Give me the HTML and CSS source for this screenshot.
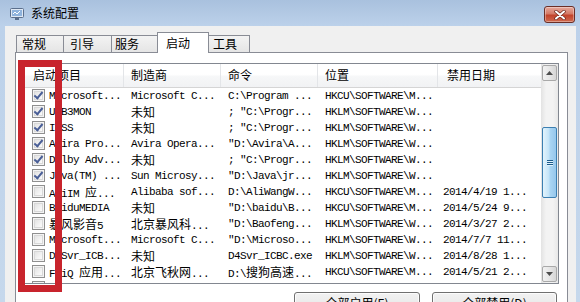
FILE: index.html
```html
<!DOCTYPE html>
<html>
<head>
<meta charset="utf-8">
<link rel="stylesheet" href="styles.css">
</head>
<body>
<div class="window">
  <div class="titlebar">
    <svg class="appicon" width="14" height="12" viewBox="0 0 14 12">
      <rect x="0.5" y="0.5" width="13" height="9" rx="1" fill="#dfe8f3" stroke="#5b6f8c"/>
      <rect x="2" y="2" width="10" height="6" fill="#8fb3dc"/>
      <path d="M3 6 L5 4 L7 6 L10 3" fill="none" stroke="#ffffff" stroke-width="1"/>
      <rect x="5" y="10" width="4" height="2" fill="#5b6f8c"/>
    </svg>
    <span class="title">系统配置</span>
    <div class="close">
      <svg width="14" height="10" viewBox="0 0 14 10">
        <path d="M3 1.5 L11 8.5 M11 1.5 L3 8.5" stroke="#6a2518" stroke-width="3.4" stroke-linecap="round"/>
        <path d="M3 1.5 L11 8.5 M11 1.5 L3 8.5" stroke="#ffffff" stroke-width="2" stroke-linecap="round"/>
      </svg>
    </div>
  </div>
  <div class="client">
    <div class="tabs">
      <div class="tab t1">常规</div>
      <div class="tab t2">引导</div>
      <div class="tab t3">服务</div>
      <div class="tab t4 sel">启动</div>
      <div class="tab t5">工具</div>
    </div>
    <div class="page">
      <div class="list">
        <div class="list-main">
          <div class="hdr">
            <div class="hc c1">启动项目</div>
            <div class="hc c2">制造商</div>
            <div class="hc c3">命令</div>
            <div class="hc c4">位置</div>
            <div class="hc c5">禁用日期</div>
          </div>
          <div class="row"><div class="c1"><span class="cb on"></span>Microsoft...</div><div class="c2">Microsoft C...</div><div class="c3">C:\Program ...</div><div class="c4">HKCU\SOFTWARE\M...</div><div class="c5"></div></div>
          <div class="row"><div class="c1"><span class="cb on"></span>USB3MON</div><div class="c2"><span class="cj">未知</span></div><div class="c3">; "C:\Progr...</div><div class="c4">HKLM\SOFTWARE\W...</div><div class="c5"></div></div>
          <div class="row"><div class="c1"><span class="cb on"></span>IDSS</div><div class="c2"><span class="cj">未知</span></div><div class="c3">; "C:\Progr...</div><div class="c4">HKLM\SOFTWARE\W...</div><div class="c5"></div></div>
          <div class="row"><div class="c1"><span class="cb on"></span>Avira Pro...</div><div class="c2">Avira Opera...</div><div class="c3">"D:\Avira\A...</div><div class="c4">HKLM\SOFTWARE\W...</div><div class="c5"></div></div>
          <div class="row"><div class="c1"><span class="cb on"></span>Dolby Adv...</div><div class="c2"><span class="cj">未知</span></div><div class="c3">; "C:\Progr...</div><div class="c4">HKLM\SOFTWARE\W...</div><div class="c5"></div></div>
          <div class="row"><div class="c1"><span class="cb on"></span>Java(TM) ...</div><div class="c2">Sun Microsy...</div><div class="c3">"D:\Java\jr...</div><div class="c4">HKLM\SOFTWARE\W...</div><div class="c5"></div></div>
          <div class="row"><div class="c1"><span class="cb"></span>AliIM <span class="cj">应</span>...</div><div class="c2">Alibaba sof...</div><div class="c3">D:\AliWangW...</div><div class="c4">HKCU\SOFTWARE\M...</div><div class="c5">2014/4/19 1...</div></div>
          <div class="row"><div class="c1"><span class="cb"></span>BaiduMEDIA</div><div class="c2"><span class="cj">未知</span></div><div class="c3">"D:\baidu\B...</div><div class="c4">HKCU\SOFTWARE\M...</div><div class="c5">2014/5/24 9...</div></div>
          <div class="row"><div class="c1"><span class="cb"></span><span class="cj">暴风影音</span>5</div><div class="c2"><span class="cj">北京暴风科</span>...</div><div class="c3">"D:\Baofeng...</div><div class="c4">HKLM\SOFTWARE\W...</div><div class="c5">2014/3/27 2...</div></div>
          <div class="row"><div class="c1"><span class="cb"></span>Microsoft...</div><div class="c2">Microsoft C...</div><div class="c3">"D:\Microso...</div><div class="c4">HKLM\SOFTWARE\W...</div><div class="c5">2014/7/7 11...</div></div>
          <div class="row"><div class="c1"><span class="cb"></span>D4Svr_ICB...</div><div class="c2"><span class="cj">未知</span></div><div class="c3">D4Svr_ICBC.exe</div><div class="c4">HKLM\SOFTWARE\W...</div><div class="c5">2014/8/28 1...</div></div>
          <div class="row"><div class="c1"><span class="cb"></span>FeiQ <span class="cj">应用</span>...</div><div class="c2"><span class="cj">北京飞秋网</span>...</div><div class="c3">D:\<span class="cj">搜狗高速</span>...</div><div class="c4">HKCU\SOFTWARE\M...</div><div class="c5">2014/5/21 2...</div></div>
          <div class="row"><div class="c1"><span class="cb"></span></div><div class="c2"></div><div class="c3"></div><div class="c4"></div><div class="c5"></div></div>
        </div>
        <div class="vscroll">
          <div class="sbtn">
            <svg width="7" height="4" viewBox="0 0 7 4"><path d="M0 4 L3.5 0 L7 4 Z" fill="#4d4d4d"/></svg>
          </div>
          <div class="track-a"></div>
          <div class="thumb"><span class="grip"></span><span class="grip"></span><span class="grip"></span></div>
          <div class="track-b"></div>
          <div class="sbtn">
            <svg width="7" height="4" viewBox="0 0 7 4"><path d="M0 0 L3.5 4 L7 0 Z" fill="#4d4d4d"/></svg>
          </div>
        </div>
      </div>
      <div class="buttons">
        <div class="btn b1">全部启用(<u>E</u>)</div>
        <div class="btn b2">全部禁用(<u>D</u>)</div>
      </div>
    </div>
  </div>
  <div class="redbox"></div>
</div>
</body>
</html>
```

FILE: styles.css
```css
* { box-sizing: border-box; }
html, body { margin: 0; padding: 0; }
body {
  width: 580px;
  height: 302px;
  overflow: hidden;
  font-family: "Noto Sans CJK SC", "Liberation Sans", sans-serif;
  font-size: 12px;
  color: #000;
}
.window {
  position: relative;
  width: 580px;
  height: 302px;
  background: linear-gradient(to bottom, #a9c1de 0px, #bcd1ea 26px, #c6d8ec 100%);
  display: flex;
  flex-direction: column;
}
.titlebar {
  height: 26px;
  flex: none;
  display: flex;
  align-items: center;
  padding-left: 10px;
}
.appicon { flex: none; margin-top: 1px; }
.title {
  margin-left: 7px;
  font-size: 12px;
  line-height: 14px;
  color: #000;
  flex: 1;
}
.close {
  width: 31px;
  height: 17px;
  margin-right: 5px;
  margin-top: 3px;
  border: 1px solid #6b2f27;
  border-radius: 3px;
  background: linear-gradient(to bottom, #e6a99d 0%, #d47a66 45%, #c2432b 55%, #cf6a4f 100%);
  box-shadow: inset 0 0 0 1px rgba(255,255,255,0.35);
  display: flex;
  align-items: center;
  justify-content: center;
}
.client {
  flex: 1;
  margin: 0 4px 0 5px;
  background: #f0f0f0;
  display: flex;
  flex-direction: column;
  padding-top: 6px;
}
.tabs {
  height: 20px;
  display: flex;
  align-items: flex-end;
  padding-left: 11px;
  position: relative;
  z-index: 2;
}
.tab {
  height: 17px;
  border: 1px solid #898c95;
  border-bottom: none;
  background: linear-gradient(to bottom, #f3f3f3, #e5e5e5);
  line-height: 15px;
  font-size: 12px;
  white-space: nowrap;
}
.t1 { width: 48px; padding-left: 5px; }
.t2 { width: 49px; padding-left: 6px; margin-left: -1px; }
.t3 { width: 47px; padding-left: 3px; margin-left: -1px; }
.t4 { width: 52px; padding-left: 8px; margin-left: -1px; }
.t5 { width: 42px; padding-left: 4px; margin-left: -1px; }
.tab.sel {
  height: 21px;
  background: #fff;
  margin-bottom: -1px;
  line-height: 19px;
  position: relative;
  z-index: 3;
}
.page {
  margin-left: 10px;
  width: 553px;
  flex: 1;
  background: #fff;
  border: 1px solid #898c95;
  border-bottom: none;
  padding: 10px 0 0 6px;
}
.list {
  width: 537px;
  height: 221px;
  border: 1px solid #828790;
  display: flex;
  background: #fff;
}
.list-main {
  width: 518px;
  overflow: hidden;
}
.hdr {
  height: 24px;
  display: grid;
  grid-template-columns: 101px 97px 97px 120px 103px;
  background: linear-gradient(to bottom, #ffffff 0%, #ffffff 45%, #f6f7f8 55%, #f1f2f4 100%);
  border-bottom: 1px solid #d5d5d5;
}
.hc {
  border-right: 1px solid #e3e5e8;
  line-height: 22px;
  font-size: 12px;
  white-space: nowrap;
  overflow: hidden;
}
.hdr .c1 { padding-left: 10px; }
.hdr .c2 { padding-left: 7px; }
.hdr .c3 { padding-left: 7px; }
.hdr .c4 { padding-left: 7px; }
.hdr .c5 { padding-left: 9px; border-right: none; }
.row {
  height: 16px;
  display: grid;
  grid-template-columns: 101px 97px 97px 120px 103px;
  font-family: "Liberation Mono", "Noto Sans CJK SC", monospace;
  font-size: 11px;
  letter-spacing: -0.6px;
  line-height: 16px;
}
.row > div {
  white-space: pre;
  overflow: hidden;
  padding-left: 7px;
}
.row .c1 {
  padding-left: 9px;
}
.row .c5 { padding-left: 5px; }
.cj {
  font-family: "Noto Sans CJK SC", sans-serif;
  font-size: 12px;
  letter-spacing: 0;
}
.cb {
  display: inline-block;
  vertical-align: top;
  margin-top: 1px;
  width: 13px;
  height: 13px;
  margin-right: 4px;
  border: 1px solid #8f8f8f;
  background: linear-gradient(135deg, #dcdcdc 0%, #f4f4f4 60%, #ffffff 100%);
  box-shadow: inset 0 0 0 1px #f4f4f4, inset 0 0 0 2px #d8d8d8;
  position: relative;
}
.cb.on::after {
  content: "";
  position: absolute;
  left: 3px;
  top: 0px;
  width: 3px;
  height: 7px;
  border-right: 2px solid #4a5f97;
  border-bottom: 2px solid #4a5f97;
  transform: rotate(40deg);
}
.vscroll {
  width: 17px;
  display: flex;
  flex-direction: column;
  align-items: center;
  background: linear-gradient(to right, #e3e3e3, #f3f3f3 30%, #f3f3f3 70%, #e8e8e8);
  padding: 1px 0;
}
.sbtn {
  width: 15px;
  height: 16px;
  flex: none;
  border: 1px solid #a9a9a9;
  border-radius: 2px;
  background: linear-gradient(to right, #f2f2f2, #e6e6e6 50%, #d6d6d6);
  display: flex;
  align-items: center;
  justify-content: center;
}
.track-a { height: 46px; flex: none; }
.thumb {
  width: 15px;
  height: 71px;
  flex: none;
  border: 1px solid #3c7fb1;
  border-radius: 2px;
  background: linear-gradient(to right, #e3f4fc, #c4e4f8 45%, #a9d5f3 55%, #96c7ec);
  display: flex;
  flex-direction: column;
  align-items: center;
  justify-content: center;
  gap: 1px;
}
.grip {
  width: 6px;
  height: 1px;
  background: #1b5b8b;
  box-shadow: 0 1px 0 #dff1fc;
}
.track-b { flex: 1; }
.buttons {
  display: flex;
  justify-content: flex-end;
  gap: 12px;
  margin-top: 8px;
  width: 535px;
}
.btn {
  height: 23px;
  border: 1px solid #707070;
  border-radius: 3px;
  background: linear-gradient(to bottom, #f2f2f2 0%, #ebebeb 50%, #dddddd 50%, #cfcfcf 100%);
  box-shadow: inset 0 0 0 1px #fcfcfc;
  text-align: center;
  line-height: 19px;
  font-size: 12px;
}
.b1 { width: 126px; }
.b2 { width: 125px; }
.redbox {
  position: absolute;
  left: 18px;
  top: 60px;
  width: 44px;
  height: 232px;
  border: 7px solid #c8242d;
}
```
